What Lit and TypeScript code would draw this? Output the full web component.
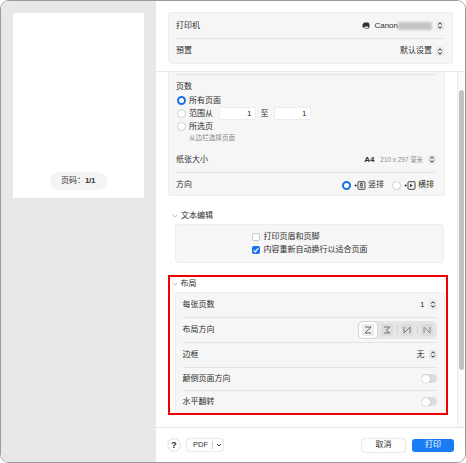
import { LitElement, html, css, svg } from "lit";
import { customElement } from "lit/decorators.js";

const stepper = html`<span class="stepper"><svg viewBox="0 0 8 9" width="8" height="9"><path d="M2.3 3.4 4 1.8l1.7 1.6M2.3 5.6 4 7.2l1.7-1.6" fill="none" stroke="#222" stroke-width="1"/></svg></span>`;
const chevron = html`<svg class="chev" viewBox="0 0 6 4" width="6" height="4"><path d="M.7.8 3 3.2 5.3.8" fill="none" stroke="#a8a8a8" stroke-width=".8"/></svg>`;
const radio = (on: boolean) => html`<span class="radio ${on ? "on" : ""}"></span>`;
const orient = (land: boolean) => html`<svg class="orient" viewBox="0 0 12 9" width="12" height="9">
  <path d="M.5 4.5h2.4M1.7 3.3v2.4" stroke="#333" stroke-width=".8"/>
  <rect x="4" y=".7" width="7" height="7.6" rx=".8" fill="none" stroke="#333" stroke-width=".9"/>
  ${land ? svg`<path d="M6 2.8v3.4L8.6 4.5z" fill="#333"/>` : svg`<path d="M6.4 2.2h2v2.4h-2zM5.6 6.2h3.8" fill="none" stroke="#333" stroke-width=".9"/>`}
</svg>`;
const layoutIcon = (d: string, c: string, bg: string) => html`<svg viewBox="0 0 12 12" width="12" height="12"><rect width="12" height="12" rx="1" fill=${bg}/><path d=${d} fill="none" stroke=${c} stroke-width="1"/></svg>`;

@customElement("app-root")
export class AppRoot extends LitElement {
  static styles = css`
    :host { display: block; width: 466px; height: 463px; overflow: hidden; background: #fff;
      font-family: "Liberation Sans", "Noto Sans CJK SC", sans-serif; font-size: 8px; color: #2e2e2e; line-height: 10px; }
    * { box-sizing: border-box; }
    .window { width: 466px; height: 463px; border: 1px solid #9c9c9c; border-radius: 9px; overflow: hidden; display: flex; }
    .side { width: 155px; flex: none; background: #e8e8e8; padding: 12px 0 0 11.5px; }
    .paper { width: 131px; height: 185px; background: #fff; display: flex; flex-direction: column; align-items: center; justify-content: flex-end; padding-bottom: 8px; }
    .pill { width: 57px; height: 18px; border-radius: 9px; background: #f4f4f4; display: flex; align-items: center; justify-content: center; color: #333; }
    .pill b { font-weight: 700; letter-spacing: -.4px; }
    .main { flex: 1; min-width: 0; display: flex; flex-direction: column; background: #fff; }
    .head { height: 71px; flex: none; padding: 11px 12px 0; border-bottom: 1px solid #e9e9e9; }
    .card { background: #f6f6f6; border: 1px solid #eeeeee; border-radius: 3px; }
    .head .card { height: 52px; padding: 0 8px 0 7px; }
    .row { display: flex; align-items: center; justify-content: space-between; }
    .row + .row { border-top: 1px solid #e4e4e4; }
    .head .row { height: 25px; }
    .right { display: flex; align-items: center; gap: 4px; }
    .stepper { width: 8px; height: 9px; background: #e8e8e8; border-radius: 2px; display: block; }
    .stepper svg { display: block; }
    .printer { display: block; }
    .blur { width: 34px; height: 8px; background: #c4c4c4; filter: blur(1px); margin-left: -4px; }
    .body { flex: 1; min-height: 0; display: flex; }
    .scroll { flex: 1; min-width: 0; height: 355px; overflow: hidden; padding: 0 12px; }
    .bar { width: 8px; flex: none; border-left: 1px solid #ececec; background: #fafafa; padding: 18px 0 0 1px; }
    .thumb { width: 5px; height: 280px; border-radius: 3px; background: #c2c2c2; }
    .top { border-top: none; border-radius: 0 0 3px 3px; height: 124px; padding: 2px 8px 0 7px; }
    .pages { height: 73px; border-top: 1px solid #e4e4e4; padding-top: 6px; }
    .pages .title { height: 11px; line-height: 11px; margin-bottom: 2px; }
    .line { display: flex; align-items: center; gap: 3.5px; height: 13px; padding-left: .5px; }
    .radio { width: 9px; height: 9px; border-radius: 50%; background: #fff; border: 1px solid #cfcfcf; flex: none; display: block; }
    .radio.on { border: 2.5px solid #1672ee; }
    .field { width: 35px; height: 11px; background: #fff; box-shadow: 0 0 1px #bdbdbd; text-align: right; padding-right: 3px; line-height: 11px; }
    .f1 { margin-left: 3px; }
    .to { margin: 0 2.5px; }
    .note { font-size: 6.6px; color: #8a8a8a; padding-left: 13px; line-height: 8px; margin-top: 1px; }
    .top .row { height: 25px; }
    .a4 { font-weight: 700; margin-right: 2px; }
    .dim { font-size: 6.4px; color: #8c8c8c; margin-right: 1px; }
    .orient { display: block; margin: 0 -1px 0 0; }
    .opt { display: flex; align-items: center; gap: 3px; }
    .opts { display: flex; gap: 8px; margin-right: 2px; }
    .sec-head { display: flex; align-items: center; gap: 3px; height: 12px; padding-left: 4px; }
    .chev { display: block; flex: none; }
    .text-sec { margin: 14px 1px 0 0; }
    .text-card { margin: 2px 0 0 7px; height: 39px; display: flex; justify-content: center; align-items: center; }
    .checks { display: flex; flex-direction: column; gap: 3px; }
    .check { display: flex; align-items: center; gap: 4px; height: 10px; }
    .box { width: 8px; height: 8px; border-radius: 2px; background: #fff; border: 1px solid #c8c8c8; display: block; flex: none; }
    .box.on { background: #1672ee; border: none; }
    .box svg { display: block; }
    .layout { border: 2.5px solid #f00000; margin: 12px -3px 0 0; width: 280px; height: 140px; overflow: hidden; padding: .5px 1.5px 0 0; }
    .layout .sec-head { padding-left: 1.5px; height: 12px; }
    .layout .card { margin: 2px 0 0 4.5px; height: 130px; padding: 0 7px; border-bottom: none; border-radius: 3px 3px 0 0; }
    .layout .row { height: 25px; }
    .layout .row.first { height: 24px; }
    .layout .row.tog { height: 23px; }
    .seg { width: 79px; height: 18px; border-radius: 5px; background: #e6e6e6; display: flex; align-items: center; }
    .seg span { width: 20px; height: 18px; display: flex; align-items: center; justify-content: center; }
    .seg span.sel { background: #fff; border: 1px solid #d6d6d6; border-radius: 5px; }
    .seg i { width: 1px; height: 8px; background: #d2d2d2; }
    .seg span.g { width: 19px; }
    .seg svg { display: block; }
    .toggle { width: 15px; height: 9px; border-radius: 5px; background: #dcdcdc; display: block; padding: .5px; }
    .toggle::before { content: ""; display: block; width: 8px; height: 8px; border-radius: 50%; background: #fff; box-shadow: 0 0 1px #8a8a8a; }
    .foot { height: 35px; flex: none; border-top: 1px solid #e6e6e6; display: flex; align-items: center; padding: 0 11px 0 12px; }
    .help { width: 12px; height: 12px; border-radius: 50%; background: #fff; box-shadow: 0 0 1.5px #999; display: flex; align-items: center; justify-content: center; font-weight: 700; font-size: 9.5px; }
    .pdf { margin-left: 7px; width: 36px; height: 12px; border-radius: 3px; background: #fff; box-shadow: 0 0 1.5px #999; display: flex; align-items: center; padding-left: 6px; font-size: 7.5px; }
    .pdf i { width: 1px; height: 8px; background: #d0d0d0; margin: 0 3px 0 4px; }
    .spacer { flex: 1; }
    .btn { width: 43px; height: 13px; border-radius: 3px; display: flex; align-items: center; justify-content: center; background: #fff; box-shadow: 0 0 1.5px #999; }
    .btn.primary { background: #1a7cf2; color: #fff; box-shadow: none; width: 42px; margin-left: 7px; }
  `;

  render() {
    return html`<div class="window">
      <aside class="side"><div class="paper"><div class="pill"><span>页码：</span><b>1/1</b></div></div></aside>
      <main class="main">
        <header class="head"><div class="card">
          <div class="row"><span>打印机</span><span class="right">
            <svg class="printer" viewBox="0 0 8 7" width="8" height="7"><path d="M2 .5h4.5l1 2v3H6.5V6.5h-4V5.5H.5V2.5z" fill="#333"/><path d="M2.6 4.5h3.4v1.4H2.6z" fill="#ddd"/></svg>
            <span>Canon</span><span class="blur"></span>${stepper}</span></div>
          <div class="row"><span>預置</span><span class="right"><span>默认设置</span>${stepper}</span></div>
        </div></header>
        <div class="body">
          <div class="scroll">
            <div class="card top">
              <div class="pages">
                <div class="title">页数</div>
                <div class="line">${radio(true)}<span>所有页面</span></div>
                <div class="line">${radio(false)}<span>范围从</span><span class="field f1">1</span><span class="to">至</span><span class="field">1</span></div>
                <div class="line">${radio(false)}<span>所选页</span></div>
                <div class="note">从边栏选择页面</div>
              </div>
              <div class="row"><span>纸张大小</span><span class="right"><span class="a4">A4</span><span class="dim">210 x 297 毫米</span>${stepper}</span></div>
              <div class="row"><span>方向</span><span class="opts">
                <span class="opt">${radio(true)}${orient(false)}<span>竖排</span></span>
                <span class="opt">${radio(false)}${orient(true)}<span>横排</span></span>
              </span></div>
            </div>
            <section class="text-sec">
              <div class="sec-head">${chevron}<span>文本编辑</span></div>
              <div class="card text-card"><div class="checks">
                <div class="check"><span class="box"></span><span>打印页眉和页脚</span></div>
                <div class="check"><span class="box on"><svg viewBox="0 0 8 8" width="8" height="8"><path d="M1.8 4.2 3.4 6l2.9-4" fill="none" stroke="#fff" stroke-width="1.2"/></svg></span><span>内容重新自动换行以适合页面</span></div>
              </div></div>
            </section>
            <section class="layout">
              <div class="sec-head">${chevron}<span>布局</span></div>
              <div class="card">
                <div class="row first"><span>每张页数</span><span class="right"><span>1</span>${stepper}</span></div>
                <div class="row"><span>布局方向</span><span class="seg">
                  <span class="sel">${layoutIcon("M3 3h6L3 9h6", "#666", "#ececec")}</span>
                  <span class="g">${layoutIcon("M3 3h6L5 6.5 9 9H3", "#777", "#dcdcdc")}</span><i></i>
                  <span class="g">${layoutIcon("M3 3v6l6-6v6", "#777", "#dcdcdc")}</span><i></i>
                  <span class="g">${layoutIcon("M3 9V3l6 6V3", "#888", "#dcdcdc")}</span>
                </span></div>
                <div class="row"><span>边框</span><span class="right"><span>无</span>${stepper}</span></div>
                <div class="row tog"><span>颠倒页面方向</span><span class="toggle"></span></div>
                <div class="row tog"><span>水平翻转</span><span class="toggle"></span></div>
              </div>
            </section>
          </div>
          <div class="bar"><div class="thumb"></div></div>
        </div>
        <footer class="foot">
          <span class="help">?</span>
          <span class="pdf">PDF<i></i><svg viewBox="0 0 6 4" width="6" height="4"><path d="M1 1l2 2 2-2" fill="none" stroke="#333" stroke-width=".9"/></svg></span>
          <span class="spacer"></span>
          <span class="btn">取消</span>
          <span class="btn primary">打印</span>
        </footer>
      </main>
    </div>`;
  }
}
